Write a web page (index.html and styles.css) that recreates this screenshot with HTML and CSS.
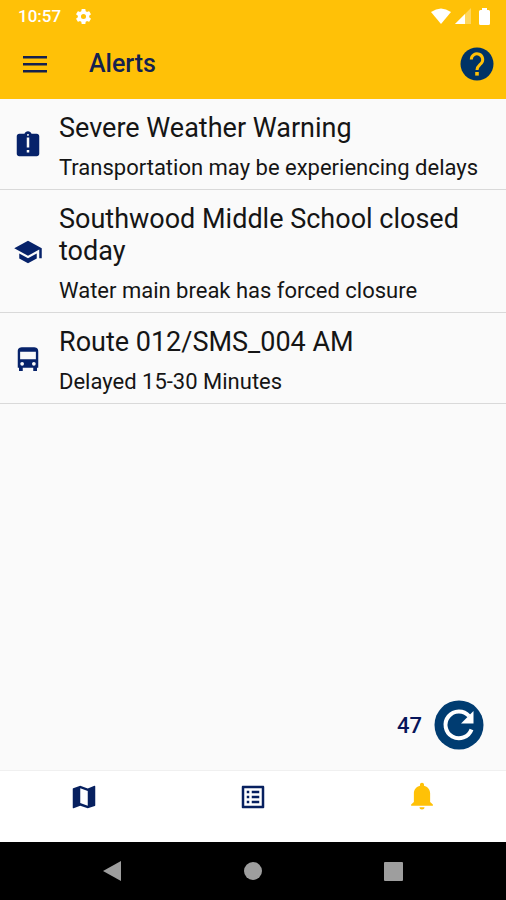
FILE: index.html
```html
<!DOCTYPE html>
<html lang="en">
<head>
    <meta charset="UTF-8">
    <meta name="viewport" content="width=device-width, initial-scale=1.0">
    <title>Alerts</title>
    <link rel="stylesheet" href="styles.css">
</head>
<body>
    <header>
        <div class="status-bar">
            <span class="time">10:57</span>
            <svg class="gear" viewBox="0 0 24 24"><path d="M19.14 12.94c.04-.3.06-.61.06-.94s-.02-.64-.07-.94l2.03-1.58a.49.49 0 0 0 .12-.61l-1.92-3.32a.49.49 0 0 0-.59-.22l-2.39.96a7 7 0 0 0-1.62-.94l-.36-2.54a.48.48 0 0 0-.48-.41h-3.84a.48.48 0 0 0-.47.41l-.36 2.54a7 7 0 0 0-1.62.94l-2.39-.96a.48.48 0 0 0-.59.22L2.74 8.87a.47.47 0 0 0 .12.61l2.03 1.58a6 6 0 0 0 0 1.88l-2.03 1.58a.49.49 0 0 0-.12.61l1.92 3.32c.12.22.37.29.59.22l2.39-.96c.5.38 1.03.7 1.62.94l.36 2.54c.05.24.24.41.48.41h3.84c.24 0 .44-.17.47-.41l.36-2.54a7 7 0 0 0 1.62-.94l2.39.96c.22.08.47 0 .59-.22l1.92-3.32a.47.47 0 0 0-.12-.61zM12 15.2a3.2 3.2 0 1 1 0-6.4 3.2 3.2 0 0 1 0 6.4z"/></svg>
            <div class="indicators">
                <svg width="20" height="16" viewBox="0 0 20 16"><path d="M0 4Q10-3 20 4L10 16z"/></svg>
                <svg width="16" height="16" viewBox="0 0 16 16"><path d="M0 16L16 0v16z" opacity=".35"/><path d="M0 16L10 6v10z"/></svg>
                <svg class="battery" width="11" height="17" viewBox="0 0 11 17"><path d="M3 0h5v2h1.500Q11 2 11 3.500v12q0 1.500-1.500 1.500h-8Q0 17 0 15.500v-12Q0 2 1.500 2H3z"/></svg>
            </div>
        </div>
        <div class="app-bar">
            <button class="icon-btn" aria-label="Menu">
                <svg width="24" height="18" viewBox="0 0 24 18"><path d="M0 1h24v2.500H0zM0 8h24v2.500H0zM0 15h24v2.500H0z"/></svg>
            </button>
            <h1>Alerts</h1>
            <button class="icon-btn help" aria-label="Help">
                <svg width="34" height="34" viewBox="0 0 34 34"><circle cx="17" cy="17" r="16.500"/><path class="mark" d="M11.300 12.500a5.700 5.700 0 1 1 9.800 4C18.700 18.900 17 19.500 17 23"/><path class="dot" d="M15.200 25h3.600v3.600h-3.600z"/></svg>
            </button>
        </div>
    </header>

    <main>
        <ul class="alerts">
            <li class="alert">
                <svg class="icon" viewBox="0 0 24 24"><path d="M19 3h-4.180C14.400 1.840 13.300 1 12 1s-2.400.84-2.820 2H5c-1.100 0-2 .9-2 2v14c0 1.100.9 2 2 2h14c1.100 0 2-.9 2-2V5c0-1.100-.9-2-2-2zm-6 15h-2v-2h2v2zm0-4h-2V6h2v8zm-1-9.250c-.41 0-.75-.34-.75-.75s.34-.75.75-.75.75.34.75.75-.34.750-.75.750z"/></svg>
                <div class="text">
                    <h2>Severe Weather Warning</h2>
                    <p>Transportation may be experiencing delays</p>
                </div>
            </li>
            <li class="alert">
                <svg class="icon" viewBox="0 0 24 24"><path d="M5 13.180v4L12 21l7-3.820v-4L12 17l-7-3.820zM12 3L1 9l11 6 9-4.910V17h2V9L12 3z"/></svg>
                <div class="text">
                    <h2>Southwood Middle School closed today</h2>
                    <p>Water main break has forced closure</p>
                </div>
            </li>
            <li class="alert">
                <svg class="icon" viewBox="0 0 24 24"><path fill-rule="evenodd" d="M8 2.500h8c3 0 4.200 1 4.200 3.500v13h-1v2.500h-3V19H7.800v2.500h-3V19h-1V6c0-2.500 1.200-3.500 4.200-3.500zM5.700 6.200v6h12.600v-6zM7.300 14.300a1.500 1.500 0 1 0 0 3 1.500 1.500 0 0 0 0-3zM16.700 14.300a1.500 1.500 0 1 0 0 3 1.500 1.500 0 0 0 0-3z"/></svg>
                <div class="text">
                    <h2>Route 012/SMS_004 AM</h2>
                    <p>Delayed 15-30 Minutes</p>
                </div>
            </li>
        </ul>

        <div class="refresh">
            <span class="countdown">47</span>
            <button class="icon-btn" aria-label="Refresh">
                <svg width="50" height="50" viewBox="0 0 50 50"><circle cx="25" cy="25" r="24.500"/><path class="arc" d="M37.500 29.500A13.400 13.400 0 1 1 35 16"/><path class="head" d="M39.500 11v12.500H27z"/></svg>
            </button>
        </div>
    </main>

    <nav class="tabs">
        <a href="#map" aria-label="Map">
            <svg class="icon" viewBox="0 0 24 24"><path d="M20.500 3l-.16.030L15 5.100 9 3 3.360 4.900c-.21.070-.36.250-.36.480V20.500c0 .28.220.5.5.5l.16-.030L9 18.900l6 2.100 5.640-1.900c.21-.070.36-.250.36-.480V3.500c0-.28-.220-.5-.5-.5zM15 19l-6-2.110V5l6 2.110V19z"/></svg>
        </a>
        <a href="#list" aria-label="List">
            <svg class="icon" viewBox="0 0 24 24"><path d="M19 5v14H5V5h14m1.100-2H3.900c-.5 0-.9.4-.9.9v16.200c0 .4.4.9.9.9h16.200c.4 0 .9-.5.9-.9V3.900c0-.5-.5-.9-.9-.9zM11 7h6v2h-6V7zm0 4h6v2h-6v-2zm0 4h6v2h-6zM7 7h2v2H7zm0 4h2v2H7zm0 4h2v2H7z"/></svg>
        </a>
        <a href="#alerts" class="active" aria-label="Alerts">
            <svg class="icon" viewBox="0 0 24 24"><path d="M12 .5c-1 0-1.600.7-1.600 1.600v.8C7.500 3.600 5.500 6 5.500 9v7L3.300 18v1h17.400v-1l-2.200-2V9c0-3-2-5.400-4.900-6.100v-.8C13.600 1.200 13 .5 12 .5zM10 20.200c0 1.100.9 1.800 2 1.800s2-.7 2-1.800z"/></svg>
        </a>
    </nav>

    <footer class="system-bar">
        <button class="icon-btn" aria-label="Back">
            <svg width="20" height="20" viewBox="0 0 20 20"><path d="M19 0v20L1 10z"/></svg>
        </button>
        <button class="icon-btn" aria-label="Home">
            <svg width="20" height="20" viewBox="0 0 20 20"><circle cx="10" cy="10" r="9"/></svg>
        </button>
        <button class="icon-btn" aria-label="Recent apps">
            <svg width="20" height="20" viewBox="0 0 20 20"><rect width="19" height="19" y="1" rx="1"/></svg>
        </button>
    </footer>
</body>
</html>
```

FILE: styles.css
```css
* {
    box-sizing: border-box;
}
body {
    display: flex;
    flex-direction: column;
    min-height: 100vh;
    margin: 0;
    background: #fafafa;
    color: #151515;
    font-family: Roboto, sans-serif;
}
h1, h2, p, ul {
    margin: 0;
    padding: 0;
}
svg {
    display: block;
    fill: currentColor;
}
.icon {
    flex: none;
    width: 30px;
    height: 30px;
}
.icon-btn {
    padding: 0;
    border: none;
    background: none;
    color: inherit;
    cursor: pointer;
}

/* header */
header {
    background: #ffc107;
    color: #14214f;
}
.status-bar {
    display: flex;
    align-items: center;
    height: 32px;
    padding: 0 16px 0 18px;
    color: #fff;
}
.time {
    font-size: 17px;
    font-weight: 500;
}
.gear {
    width: 19px;
    height: 19px;
    margin-left: 13px;
}
.indicators {
    display: flex;
    align-items: center;
    gap: 4px;
    margin-left: auto;
}
.battery {
    margin-left: 4px;
}
.app-bar {
    display: flex;
    align-items: center;
    padding: 15px 12px 18px 23px;
}
.app-bar h1 {
    margin-left: 42px;
    font-size: 25px;
    font-weight: 500;
    line-height: 32px;
}
.help {
    margin-left: auto;
    color: #003366;
}
.help .mark {
    fill: none;
    stroke: #ffc107;
    stroke-width: 3;
}
.help .dot {
    fill: #ffc107;
}

/* alert list */
main {
    display: flex;
    flex: 1;
    flex-direction: column;
}
.alerts {
    list-style: none;
}
.alert {
    display: flex;
    align-items: center;
    gap: 16px;
    padding: 13px 16px 8px 13px;
    border-bottom: 1px solid #d9d9d9;
}
.alert .icon {
    margin-bottom: 4px;
    color: #06226a;
}
.text h2 {
    margin-bottom: 11px;
    font-size: 27px;
    font-weight: 400;
    line-height: 32px;
}
.text p {
    font-size: 22px;
    line-height: 26px;
}

.refresh {
    display: flex;
    align-items: center;
    justify-content: flex-end;
    gap: 12px;
    margin-top: auto;
    padding: 20px 22px;
    color: #003c71;
}
.countdown {
    color: #07155a;
    font-size: 22px;
    font-weight: 500;
}
.refresh .arc {
    fill: none;
    stroke: #fff;
    stroke-width: 4;
}
.refresh .head {
    fill: #fff;
}

/* bottom tabs */
.tabs {
    display: flex;
    height: 72px;
    padding-top: 11px;
    border-top: 1px solid #f0f0f0;
    background: #fff;
}
.tabs a {
    display: flex;
    flex: 1;
    justify-content: center;
    color: #07205f;
}
.tabs .active {
    color: #ffc107;
}

.system-bar {
    display: flex;
    align-items: center;
    justify-content: space-around;
    height: 58px;
    padding: 0 42px;
    background: #000;
    color: #9e9e9e;
}
```
